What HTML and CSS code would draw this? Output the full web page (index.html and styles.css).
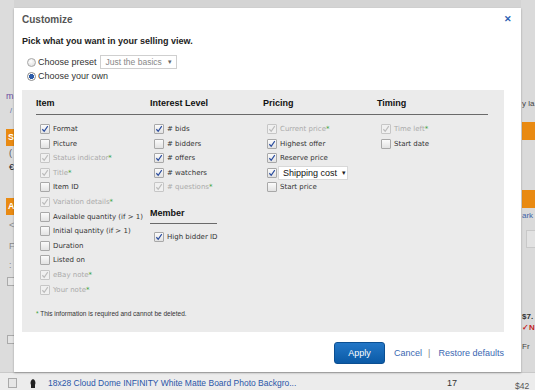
FILE: index.html
```html
<!DOCTYPE html>
<html>
<head>
<meta charset="utf-8">
<link rel="stylesheet" href="styles.css">
</head>
<body>
<div class="screen">
  <div class="bg">
    <div class="side left">
      <span class="s-m">m</span>
      <span class="s-slash">/</span>
      <span class="s-orange">S</span>
      <span class="s-txt t1">(</span>
      <span class="s-txt t2">€</span>
      <span class="s-orange o2">A</span>
      <span class="s-txt t3">&lt;</span>
      <span class="s-txt t4">F</span>
      <span class="s-txt t5">:</span>
      <span class="s-box b1"></span>
      <span class="s-box b2"></span>
    </div>
    <div class="mid"></div>
    <div class="side right">
      <span class="r-txt r1">y la</span>
      <span class="r-orange"></span>
      <span class="r-orange ro2"></span>
      <span class="r-link">ark</span>
      <span class="r-box"></span>
      <span class="r-txt r2">$7.</span>
      <span class="r-red">✓N</span>
      <span class="r-txt r3">Fr</span>
    </div>
  </div>
  <div class="listing">
    <span class="l-box"></span>
    <svg class="l-icon" width="6" height="9" viewBox="0 0 6 9"><path d="M3 0 C5.5 1 6 4 5 6 L5 9 L1 9 L1 6 C0 4 0.5 1 3 0Z" fill="#222"/></svg>
    <span class="l-link">18x28 Cloud Dome INFINITY White Matte Board Photo Backgro...</span>
    <span class="l-num">17</span>
    <span class="l-price">$42</span>
  </div>

  <div class="dialog">
    <div class="title-row">
      <h1 class="title">Customize</h1>
      <span class="close">✕</span>
    </div>
    <p class="lead">Pick what you want in your selling view.</p>
    <div class="radio-row">
      <span class="radio"></span>
      <span class="radio-label">Choose preset</span>
      <span class="select preset">Just the basics <span class="caret">▾</span></span>
    </div>
    <div class="radio-row second">
      <span class="radio on"></span>
      <span class="radio-label">Choose your own</span>
    </div>

    <div class="panel">
      <div class="cols">
        <div class="col">
          <div class="head">Item</div>
          <div class="rows">
            <div class="row"><span class="cb on"><svg viewBox="0 0 9 9"><path d="M1.5 4.8 L3.6 7 L7.6 1.2"/></svg></span>Format</div>
            <div class="row"><span class="cb"></span>Picture</div>
            <div class="row dis"><span class="cb on"><svg viewBox="0 0 9 9"><path d="M1.5 4.8 L3.6 7 L7.6 1.2"/></svg></span>Status indicator<i>*</i></div>
            <div class="row dis"><span class="cb on"><svg viewBox="0 0 9 9"><path d="M1.5 4.8 L3.6 7 L7.6 1.2"/></svg></span>Title<i>*</i></div>
            <div class="row"><span class="cb"></span>Item ID</div>
            <div class="row dis"><span class="cb on"><svg viewBox="0 0 9 9"><path d="M1.5 4.8 L3.6 7 L7.6 1.2"/></svg></span>Variation details<i>*</i></div>
            <div class="row"><span class="cb"></span>Available quantity (if &gt; 1)</div>
            <div class="row"><span class="cb"></span>Initial quantity (if &gt; 1)</div>
            <div class="row"><span class="cb"></span>Duration</div>
            <div class="row"><span class="cb"></span>Listed on</div>
            <div class="row dis"><span class="cb on"><svg viewBox="0 0 9 9"><path d="M1.5 4.8 L3.6 7 L7.6 1.2"/></svg></span>eBay note<i>*</i></div>
            <div class="row dis"><span class="cb on"><svg viewBox="0 0 9 9"><path d="M1.5 4.8 L3.6 7 L7.6 1.2"/></svg></span>Your note<i>*</i></div>
          </div>
        </div>
        <div class="col">
          <div class="head">Interest Level</div>
          <div class="rows">
            <div class="row"><span class="cb on"><svg viewBox="0 0 9 9"><path d="M1.5 4.8 L3.6 7 L7.6 1.2"/></svg></span># bids</div>
            <div class="row"><span class="cb"></span># bidders</div>
            <div class="row"><span class="cb on"><svg viewBox="0 0 9 9"><path d="M1.5 4.8 L3.6 7 L7.6 1.2"/></svg></span># offers</div>
            <div class="row"><span class="cb on"><svg viewBox="0 0 9 9"><path d="M1.5 4.8 L3.6 7 L7.6 1.2"/></svg></span># watchers</div>
            <div class="row dis"><span class="cb on"><svg viewBox="0 0 9 9"><path d="M1.5 4.8 L3.6 7 L7.6 1.2"/></svg></span># questions<i>*</i></div>
          </div>
          <div class="head member">Member</div>
          <div class="rows member-rows">
            <div class="row"><span class="cb on"><svg viewBox="0 0 9 9"><path d="M1.5 4.8 L3.6 7 L7.6 1.2"/></svg></span>High bidder ID</div>
          </div>
        </div>
        <div class="col">
          <div class="head">Pricing</div>
          <div class="rows">
            <div class="row dis"><span class="cb on"><svg viewBox="0 0 9 9"><path d="M1.5 4.8 L3.6 7 L7.6 1.2"/></svg></span>Current price<i>*</i></div>
            <div class="row"><span class="cb on"><svg viewBox="0 0 9 9"><path d="M1.5 4.8 L3.6 7 L7.6 1.2"/></svg></span>Highest offer</div>
            <div class="row"><span class="cb on"><svg viewBox="0 0 9 9"><path d="M1.5 4.8 L3.6 7 L7.6 1.2"/></svg></span>Reserve price</div>
            <div class="row"><span class="cb on"><svg viewBox="0 0 9 9"><path d="M1.5 4.8 L3.6 7 L7.6 1.2"/></svg></span><span class="select ship">Shipping cost <span class="caret dark">▾</span></span></div>
            <div class="row"><span class="cb"></span>Start price</div>
          </div>
        </div>
        <div class="col last">
          <div class="head">Timing</div>
          <div class="rows">
            <div class="row dis"><span class="cb on"><svg viewBox="0 0 9 9"><path d="M1.5 4.8 L3.6 7 L7.6 1.2"/></svg></span>Time left<i>*</i></div>
            <div class="row"><span class="cb"></span>Start date</div>
          </div>
        </div>
      </div>
      <p class="note"><i>*</i> This information is required and cannot be deleted.</p>
    </div>

    <div class="actions">
      <button class="apply">Apply</button>
      <a class="link">Cancel</a>
      <span class="sep">|</span>
      <a class="link">Restore defaults</a>
    </div>
  </div>
</div>
</body>
</html>
```
FILE: styles.css
```css
* { box-sizing: border-box; }
html, body { margin: 0; padding: 0; }
body { width: 535px; height: 390px; overflow: hidden; background: #d6d6d6; font-family: "Liberation Sans", Arial, sans-serif; }

.screen { position: relative; width: 535px; height: 390px; }

.bg { display: grid; grid-template-columns: 14px 507px 14px; height: 372px; background: #d4d4d4; }
.side { display: flex; flex-direction: column; align-items: flex-start; font-size: 9px; line-height: 10px; overflow: hidden; }
.side.left { background: #dcdcdc; padding-left: 6px; }
.s-m { color: #6b4ea0; margin-top: 91px; }
.s-slash { color: #4a66a8; margin-top: 5px; margin-left: 4px; font-size: 7px; }
.s-orange { background: #e98a12; color: #fff; font-weight: bold; width: 12px; height: 17px; margin-top: 13px; padding: 3px 0 0 2px; }
.s-orange.o2 { margin-top: 26px; }
.s-txt { color: #555; margin-left: 3px; }
.t1 { margin-top: 2px; }
.t2 { margin-top: 4px; color: #222; }
.t3 { margin-top: 5px; color: #888; }
.t4 { margin-top: 11px; color: #888; }
.t5 { margin-top: 9px; color: #888; }
.s-box { width: 8px; height: 9px; border: 1px solid #aaa; background: #e4e4e4; margin-top: 7px; margin-left: 1px; }
.s-box.b2 { margin-top: 49px; }

.side.right { background: #dadada; padding-left: 1px; }
.r-txt { color: #444; font-size: 8px; }
.r1 { margin-top: 99px; }
.r-orange { width: 14px; height: 18px; background: #e98a12; margin-top: 13px; }
.ro2 { margin-top: 50px; }
.r-link { color: #3d63a8; font-size: 8px; margin-top: 3px; }
.r-box { width: 14px; height: 18px; border: 1px solid #c8c8c8; background: #e2e2e2; margin-top: 9px; margin-left: 4px; }
.r2 { margin-top: 64px; font-weight: bold; color: #333; }
.r-red { color: #c41e1e; font-size: 8px; font-weight: bold; margin-top: 1px; }
.r3 { margin-top: 9px; }

.listing { height: 18px; background: #ececec; border-top: 1px solid #c9c9c9; display: flex; align-items: flex-start; padding-top: 5px; font-size: 8.5px; }
.l-box { width: 9px; height: 10px; border: 1px solid #aaa; background: #e6e6e6; margin-left: 8px; }
.l-icon { margin-left: 13px; margin-top: 1px; }
.l-link { color: #2a56a8; margin-left: 12px; width: 399px; white-space: nowrap; }
.l-num { color: #333; margin-top: 0; font-size: 9px; }
.l-price { color: #555; margin-left: 58px; margin-top: 3px; }

/* Dialog */
.dialog { position: absolute; left: 14px; top: 8px; width: 507px; height: 364px; background: #fff; padding: 6px 17px 0 8px; box-shadow: 0 1px 2px rgba(0,0,0,0.3); color: #333; }
.title-row { display: flex; justify-content: space-between; align-items: center; height: 12px; }
.title { margin: 0; font-size: 10px; font-weight: bold; color: #555; line-height: 12px; }
.close { color: #2d5fb3; font-size: 9px; font-weight: bold; margin-right: -8px; margin-top: -3px; }
.lead { margin: 10px 0 0; font-size: 9px; font-weight: bold; line-height: 11px; color: #222; }

.radio-row { display: flex; align-items: center; height: 14px; margin-top: 8px; padding-left: 5px; }
.radio-row.second { margin-top: 0; }
.radio { width: 9px; height: 9px; border-radius: 50%; border: 1px solid #a6a6a6; background: radial-gradient(circle at 40% 35%, #fff, #d8d8d8); }
.radio.on { background: radial-gradient(circle, #2a5aa8 0 2.4px, #fff 2.8px); border-color: #8a8a8a; }
.radio-label { font-size: 9px; color: #333; margin-left: 2px; }
.select { display: inline-flex; align-items: center; height: 14px; border: 1px solid #cfcfcf; background: #fff; white-space: nowrap; }
.select.preset { margin-left: 3px; width: 77px; padding-left: 5px; font-size: 8.5px; color: #888; }
.caret { font-size: 7px; margin-left: 6px; color: #666; }
.caret.dark { color: #222; margin-left: 5px; }

.panel { margin-top: 7px; width: 482px; height: 242px; background: #ebebeb; padding: 8px 0 0 14px; }
.cols { display: grid; grid-template-columns: 114px 113px 114px 111px; }
.head { font-size: 9px; font-weight: bold; line-height: 10px; color: #111; padding-bottom: 6px; border-bottom: 1px solid #6a6a6a; }
.rows { padding-top: 6.7px; }
.row { display: flex; align-items: center; height: 14.6px; font-family: "DejaVu Sans", Verdana, sans-serif; font-size: 7px; color: #333; white-space: nowrap; }
.row.dis { color: #aaa; }
.row i, .note i { font-style: normal; color: #3aa23a; }
.cb { width: 10px; height: 10px; flex: none; margin: 0 3px 0 4px; border: 1px solid #a8a8a8; border-radius: 1px; background: linear-gradient(#fbfbfb, #e2e2e2); display: flex; }
.cb svg { width: 8px; height: 8px; fill: none; stroke: #2b4d9e; stroke-width: 1.3; }
.row.dis .cb { border-color: #c6c6c6; background: #f0f0f0; }
.row.dis .cb svg { stroke: #bcbcbc; }
.head.member { margin-top: 13.3px; width: 67px; padding-bottom: 5px; }
.member-rows { padding-top: 5.7px; }
.select.ship { width: 70px; padding-left: 4px; font-family: "Liberation Sans", Arial, sans-serif; font-size: 9px; color: #111; border-color: #d8d8d8; margin-left: -2px; }

.note { margin: 13px 0 0; font-size: 6.5px; line-height: 8px; color: #333; }

.actions { display: flex; align-items: center; justify-content: flex-end; margin-top: 10px; width: 482px; height: 22px; font-size: 9px; }
.apply { width: 51px; height: 22px; border: 1px solid #0b4f92; border-radius: 3px; background: linear-gradient(#2377c7, #0b5aa6); color: #fff; font-family: "Liberation Sans", Arial, sans-serif; font-size: 9px; padding: 0; }
.link { color: #3a67b2; margin-left: 9px; }
.sep { color: #888; margin-left: 6px; margin-right: -1px; }
```
